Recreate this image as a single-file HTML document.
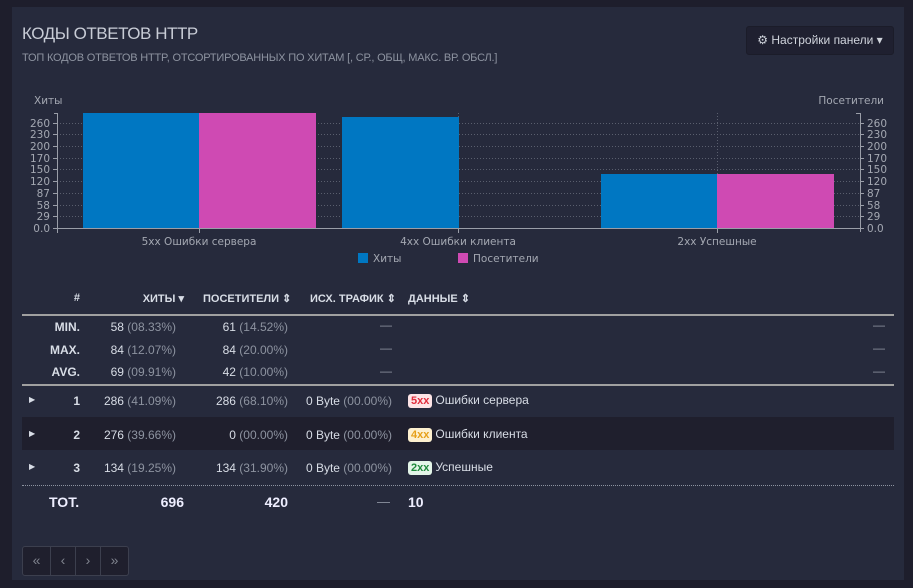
<!DOCTYPE html>
<html><head><meta charset="utf-8"><style>
*{margin:0;padding:0;box-sizing:border-box}
body{width:913px;height:588px;background:#1e1e2c;font-family:"Liberation Sans",Arial,sans-serif;position:relative;overflow:hidden}
.panel{position:absolute;left:12px;top:7px;width:892px;height:573px;background:#262a3c}
.a{position:absolute;white-space:nowrap}
.t{font-size:12px;color:#d8dde6}
.g{color:#8d93a0}
.r{text-align:right}
.b{font-weight:bold}
.badge{display:inline-block;font-size:11px;font-weight:bold;padding:1px 3px;border-radius:3px;margin-right:3px}
</style></head><body>
<div class="panel"></div>
<div class="a" style="left:22px;top:24px;font-size:17px;color:#c8ccd6;letter-spacing:-0.45px">КОДЫ ОТВЕТОВ HTTP</div>
<div class="a" style="left:22px;top:52px;font-size:11px;color:#8d93a0;letter-spacing:-0.2px">ТОП КОДОВ ОТВЕТОВ HTTP, ОТСОРТИРОВАННЫХ ПО ХИТАМ [, СР., ОБЩ, МАКС. ВР. ОБСЛ.]</div>
<div class="a" style="left:746px;top:26px;width:148px;height:29px;border:1px solid #1b1c29;background:#1f2030;border-radius:3px;color:#d0d4dc;font-size:12px;line-height:27px;text-align:center">⚙ Настройки панели ▾</div>

<svg class="a" style="left:0;top:0" width="913" height="280" font-family="DejaVu Sans,sans-serif" font-size="10.5">
<g stroke="#5a5f6e" stroke-dasharray="1,2" stroke-width="1">
<line x1="57" x2="860" y1="123.5" y2="123.5"/><line x1="57" x2="860" y1="134.5" y2="134.5"/><line x1="57" x2="860" y1="146.5" y2="146.5"/><line x1="57" x2="860" y1="158.5" y2="158.5"/><line x1="57" x2="860" y1="169.5" y2="169.5"/><line x1="57" x2="860" y1="181.5" y2="181.5"/><line x1="57" x2="860" y1="193.5" y2="193.5"/><line x1="57" x2="860" y1="205.5" y2="205.5"/><line x1="57" x2="860" y1="216.5" y2="216.5"/>
<line x1="199.5" x2="199.5" y1="113" y2="228"/><line x1="458.5" x2="458.5" y1="113" y2="228"/><line x1="717.5" x2="717.5" y1="113" y2="228"/>
</g>
<rect x="83" y="113" width="116" height="115" fill="#0077c2"/>
<rect x="199" y="113" width="117" height="115" fill="#cf4ab3"/>
<rect x="342" y="117" width="117" height="111" fill="#0077c2"/>
<rect x="601" y="174" width="116" height="54" fill="#0077c2"/>
<rect x="717" y="174" width="117" height="54" fill="#cf4ab3"/>
<g stroke="#9a9ea8" fill="none">
<path d="M54 113.5H57.5V228M57 228.5H860.5M856 113.5H860.5V232"/>
<path d="M57.5 228v5M199.5 228v5M458.5 228v5M717.5 228v5"/>
<path d="M53 123.5h4M53 134.5h4M53 146.5h4M53 158.5h4M53 169.5h4M53 181.5h4M53 193.5h4M53 205.5h4M53 216.5h4M53 228.5h4"/>
<path d="M860 123.5h4M860 134.5h4M860 146.5h4M860 158.5h4M860 169.5h4M860 181.5h4M860 193.5h4M860 205.5h4M860 216.5h4M860 228.5h4"/>
</g>
<g fill="#a4a8b2" text-anchor="end">
<text x="50" y="127">260</text><text x="50" y="138">230</text><text x="50" y="150">200</text><text x="50" y="162">170</text><text x="50" y="173">150</text><text x="50" y="185">120</text><text x="50" y="197">87</text><text x="50" y="209">58</text><text x="50" y="220">29</text><text x="50" y="232">0.0</text>
</g>
<g fill="#a4a8b2">
<text x="867" y="127">260</text><text x="867" y="138">230</text><text x="867" y="150">200</text><text x="867" y="162">170</text><text x="867" y="173">150</text><text x="867" y="185">120</text><text x="867" y="197">87</text><text x="867" y="209">58</text><text x="867" y="220">29</text><text x="867" y="232">0.0</text>
<text x="34" y="104">Хиты</text>
<text x="884" y="104" text-anchor="end">Посетители</text>
<text x="199" y="245" text-anchor="middle">5xx Ошибки сервера</text>
<text x="458" y="245" text-anchor="middle">4xx Ошибки клиента</text>
<text x="717" y="245" text-anchor="middle">2xx Успешные</text>
<text x="373" y="262">Хиты</text><text x="473" y="262">Посетители</text>
</g>
<rect x="358" y="253" width="10" height="10" fill="#0077c2"/>
<rect x="458" y="253" width="10" height="10" fill="#cf4ab3"/>
</svg>

<div class="a" style="left:22px;top:417px;width:872px;height:33px;background:#1f1f2d"></div>
<div class="a" style="left:22px;top:314px;width:872px;height:2px;background:#a0a0a0"></div>
<div class="a" style="left:22px;top:384px;width:872px;height:2px;background:#a0a0a0"></div>
<div class="a" style="left:22px;top:485px;width:872px;border-top:1px dotted #8d93a0"></div>

<div class="a t b" style="font-size:11px;top:292px;left:60px;width:20px;text-align:right">#</div>
<div class="a t b r" style="font-size:11px;top:292px;left:100px;width:84px">ХИТЫ ▾</div>
<div class="a t b" style="font-size:11px;top:292px;left:203px">ПОСЕТИТЕЛИ ⇕</div>
<div class="a t b" style="font-size:11px;top:292px;left:310px">ИСХ. ТРАФИК ⇕</div>
<div class="a t b" style="font-size:11px;top:292px;left:408px">ДАННЫЕ ⇕</div>

<div class="a t b r" style="top:320px;left:30px;width:50px">MIN.</div>
<div class="a t r" style="top:320px;left:90px;width:86px">58 <span class="g">(08.33%)</span></div>
<div class="a t r" style="top:320px;left:190px;width:98px">61 <span class="g">(14.52%)</span></div>
<div class="a g" style="top:318px;left:380px;font-size:12px">—</div><div class="a g" style="top:318px;left:873px;font-size:12px">—</div>
<div class="a t b r" style="top:343px;left:30px;width:50px">MAX.</div>
<div class="a t r" style="top:343px;left:90px;width:86px">84 <span class="g">(12.07%)</span></div>
<div class="a t r" style="top:343px;left:190px;width:98px">84 <span class="g">(20.00%)</span></div>
<div class="a g" style="top:341px;left:380px;font-size:12px">—</div><div class="a g" style="top:341px;left:873px;font-size:12px">—</div>
<div class="a t b r" style="top:365px;left:30px;width:50px">AVG.</div>
<div class="a t r" style="top:365px;left:90px;width:86px">69 <span class="g">(09.91%)</span></div>
<div class="a t r" style="top:365px;left:190px;width:98px">42 <span class="g">(10.00%)</span></div>
<div class="a g" style="top:364px;left:380px;font-size:12px">—</div><div class="a g" style="top:364px;left:873px;font-size:12px">—</div>

<div class="a t" style="top:395px;left:29px;font-size:8px">▶</div>
<div class="a t b r" style="top:394px;left:50px;width:30px">1</div>
<div class="a t r" style="top:394px;left:90px;width:86px">286 <span class="g">(41.09%)</span></div>
<div class="a t r" style="top:394px;left:190px;width:98px">286 <span class="g">(68.10%)</span></div>
<div class="a t r" style="top:394px;left:300px;width:92px">0 Byte <span class="g">(00.00%)</span></div>
<div class="a t" style="top:393px;left:408px"><span class="badge" style="background:#fde4e6;color:#e02b3b">5xx</span>Ошибки сервера</div>

<div class="a t" style="top:429px;left:29px;font-size:8px">▶</div>
<div class="a t b r" style="top:428px;left:50px;width:30px">2</div>
<div class="a t r" style="top:428px;left:90px;width:86px">276 <span class="g">(39.66%)</span></div>
<div class="a t r" style="top:428px;left:190px;width:98px">0 <span class="g">(00.00%)</span></div>
<div class="a t r" style="top:428px;left:300px;width:92px">0 Byte <span class="g">(00.00%)</span></div>
<div class="a t" style="top:427px;left:408px"><span class="badge" style="background:#fdf0cf;color:#e6a019">4xx</span>Ошибки клиента</div>

<div class="a t" style="top:462px;left:29px;font-size:8px">▶</div>
<div class="a t b r" style="top:461px;left:50px;width:30px">3</div>
<div class="a t r" style="top:461px;left:90px;width:86px">134 <span class="g">(19.25%)</span></div>
<div class="a t r" style="top:461px;left:190px;width:98px">134 <span class="g">(31.90%)</span></div>
<div class="a t r" style="top:461px;left:300px;width:92px">0 Byte <span class="g">(00.00%)</span></div>
<div class="a t" style="top:460px;left:408px"><span class="badge" style="background:#e3f5e8;color:#1f8a3c">2xx</span>Успешные</div>

<div class="a t b" style="top:494px;left:49px;font-size:14px;color:#eef">TOT.</div>
<div class="a t b r" style="top:494px;left:120px;width:64px;font-size:14px;color:#eef">696</div>
<div class="a t b r" style="top:494px;left:230px;width:58px;font-size:14px;color:#eef">420</div>
<div class="a g" style="top:494px;left:377px;font-size:13px">—</div>
<div class="a t b" style="top:494px;left:408px;font-size:14px;color:#eef">10</div>

<div class="a" style="left:22px;top:546px;width:107px;height:30px;border:1px solid #3c3f4e;border-radius:3px;background:#1f1f2d;display:flex;color:#80848f;font-size:14px">
<div style="width:28px;border-right:1px solid #3c3f4e;text-align:center;line-height:27px">«</div>
<div style="width:25px;border-right:1px solid #3c3f4e;text-align:center;line-height:27px">‹</div>
<div style="width:25px;border-right:1px solid #3c3f4e;text-align:center;line-height:27px">›</div>
<div style="flex:1;text-align:center;line-height:27px">»</div>
</div>
</body></html>
